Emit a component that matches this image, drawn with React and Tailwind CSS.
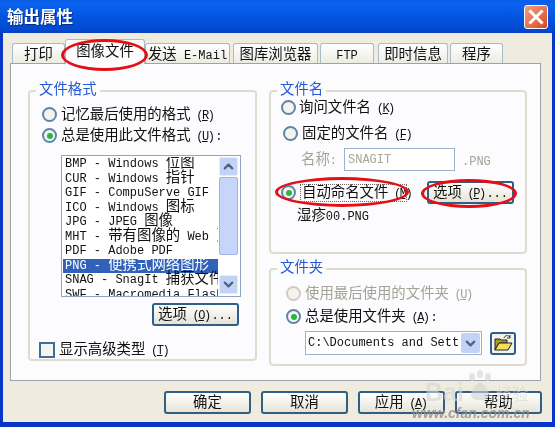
import { ChevronDown, ChevronUp } from 'lucide-react';

const CJK_STACK = '"Noto Sans CJK SC", sans-serif';

// CJK glyphs sit at 14px in the dialog, latin text is 12px mono, hotkeys like (R) are squeezed
const Mixed = ({ text, className = 'relative top-[1px]' }) => (
  <span className={`whitespace-pre ${className}`}>
    {text.split(/( \([A-Z]\)|[\u3000-\u9fff\uff00-\uffef]+)/).map((part, i) => {
      if (/^ \([A-Z]\)$/.test(part)) {
        return (
          <span key={i} className="tracking-[-1.5px]">
            {' ('}
            <span className="underline">{part[2]}</span>
            {')'}
            <span className="tracking-normal text-[3px]"> </span>
          </span>
        );
      }
      if (/[\u3000-\u9fff\uff00-\uffef]/.test(part)) {
        return (
          <span key={i} className="text-[14.4px] leading-[0]" style={{ fontFamily: CJK_STACK }}>
            {part}
          </span>
        );
      }
      return <span key={i}>{part}</span>;
    })}
  </span>
);

const Radio = ({ checked, disabled }) => (
  <span
    className={`flex h-[15px] w-[15px] shrink-0 items-center justify-center rounded-full border-2 bg-[#f4f3ee] ${
      disabled ? 'border-[#cfcdc2]' : 'border-[#5d86a8]'
    }`}
  >
    {checked && <span className="h-[6px] w-[6px] rounded-full bg-[#2fb344]" />}
  </span>
);

const RadioRow = ({ label, checked, disabled, className = '' }) => (
  <div className={`flex h-[21px] items-center gap-[4px] ${className}`}>
    <Radio checked={checked} disabled={disabled} />
    <span className={`whitespace-nowrap ${disabled ? 'text-[#a5a397]' : 'text-[#111]'}`}>
      <Mixed text={label} />
    </span>
  </div>
);

const XpButton = ({ label, className = '' }) => (
  <button className={`flex h-[23px] w-[87px] items-center justify-center rounded-[3px] border-2 border-[#2f5f86] bg-linear-to-b from-white to-[#e6e3d6] text-[#111] ${className}`}>
    <Mixed text={label} />
  </button>
);

const Group = ({ title, className = '', children }) => (
  <div className={`relative rounded-[4px] border-2 border-[#dedccf] ${className}`}>
    <span className="absolute -top-[8px] left-[6px] bg-[#fcfcfe] px-[3px] text-[#2359d8]">
      <Mixed text={title} />
    </span>
    {children}
  </div>
);

const tabs = [
  { label: '打印', w: 'w-[53px]' },
  { label: '图像文件', w: 'w-[80px]', active: true },
  { label: '发送 E-Mail', w: 'w-[85px]' },
  { label: '图库浏览器', w: 'w-[85px] ml-[3px]' },
  { label: 'FTP', w: 'w-[54px] ml-[2px]' },
  { label: '即时信息', w: 'w-[70px] ml-[4px]' },
  { label: '程序', w: 'w-[53px] ml-[2px]' },
];

const formats = [
  'BMP - Windows 位图',
  'CUR - Windows 指针',
  'GIF - CompuServe GIF',
  'ICO - Windows 图标',
  'JPG - JPEG 图像',
  'MHT - 带有图像的 Web 页',
  'PDF - Adobe PDF',
  'PNG - 便携式网络图形',
  'SNAG - SnagIt 捕获文件',
  'SWF - Macromedia Flash',
];

const ScrollButton = ({ children }) => (
  <div className="flex h-[19px] items-center justify-center rounded-[2px] border border-[#e4ecfb] bg-[#c3d3f8] text-[#4d6185]">
    {children}
  </div>
);

const Ellipse = ({ className }) => (
  <div className={`pointer-events-none absolute z-20 rounded-[50%] border-[3px] border-[#e40f14] ${className}`} />
);

export default function App() {
  return (
    <div
      className="relative flex h-[427px] w-[555px] flex-col overflow-hidden bg-[#0a36c8] text-[12px] leading-none blur-[0.35px]"
      style={{ fontFamily: '"Liberation Mono", "Noto Sans CJK SC", monospace' }}
    >
      <div className="flex h-[33px] shrink-0 items-center justify-between bg-[linear-gradient(#0a5fe8,#0a62ee_15%,#0355e0_50%,#0249cf_90%,#0a3fc0)] pl-[7px] pr-[7px]">
        <span
          className="text-[16.5px] font-bold text-white [text-shadow:1px_1px_1px_#0b2a80]"
          style={{ fontFamily: CJK_STACK }}
        >
          输出属性
        </span>
        <div className="flex h-[24px] w-[24px] items-center justify-center rounded-[3px] border border-white bg-linear-to-br from-[#f0a080] to-[#d6431c]">
          <svg width="16" height="16" viewBox="0 0 16 16">
            <path d="M2.5 2.5 13.5 13.5M13.5 2.5 2.5 13.5" stroke="#fff" strokeWidth="3" strokeLinecap="square" />
          </svg>
        </div>
      </div>

      <div className="mx-[3px] mb-[5px] flex flex-1 flex-col bg-[#efecdf]">
        <div className="flex h-[30px] shrink-0 items-end pl-[9px]">
          {tabs.map((tab) => (
            <div
              key={tab.label}
              className={`flex items-center justify-center whitespace-nowrap rounded-t-[3px] border border-b-0 border-[#a9bac8] text-[#111] ${tab.w} ${
                tab.active
                  ? 'relative z-10 -mb-[1px] h-[25px] bg-[#fcfcfe]'
                  : 'h-[20px] bg-linear-to-b from-white to-[#ecebe2] pt-[2px]'
              }`}
            >
              <Mixed text={tab.label} />
            </div>
          ))}
        </div>

        <div className="ml-[7px] flex h-[318px] w-[531px] shrink-0 gap-[12px] border border-[#98a5ad] bg-[#fcfcfe] pl-[17px] pt-[26px]">
          <Group title="文件格式" className="h-[271px] w-[229px] pl-[12px] pt-[12px]">
            <RadioRow label="记忆最后使用的格式 (R)" />
            <RadioRow label="总是使用此文件格式 (U):" checked />
            <div className="ml-[19px] mt-[9px] flex h-[142px] w-[180px] overflow-hidden border border-[#8fa7c4] bg-white pl-[1px] pt-[1px]">
              <div className="w-[155px] overflow-hidden">
                {formats.map((row, i) => (
                  <div
                    key={row}
                    className={`flex h-[14.5px] shrink-0 items-center whitespace-nowrap pl-[2px] ${
                      i === 7 ? 'bg-[#2f62b8] text-white' : 'text-[#111]'
                    }`}
                  >
                    <Mixed text={row} className="" />
                  </div>
                ))}
              </div>
              <div className="ml-[1px] flex w-[19px] flex-col">
                <ScrollButton><ChevronUp size={15} strokeWidth={3.5} /></ScrollButton>
                <div className="mt-[1px] h-[78px] rounded-[2px] border border-[#9db4e6] bg-[#c6d5f9]" />
                <div className="flex-1" />
                <div className="mb-[2px]">
                  <ScrollButton><ChevronDown size={15} strokeWidth={3.5} /></ScrollButton>
                </div>
              </div>
            </div>
            <XpButton label="选项 (O)..." className="ml-[110px] mt-[6px]" />
            <div className="-ml-[3px] mt-[16px] flex items-center gap-[4px]">
              <span className="h-[16px] w-[16px] border-2 border-[#3e6f98] bg-[#f5f4ee]" />
              <span className="whitespace-nowrap text-[#111]"><Mixed text="显示高级类型 (T)" /></span>
            </div>
          </Group>

          <div className="flex w-[258px] flex-col gap-[14px]">
            <Group title="文件名" className="h-[164px] w-[258px] pl-[10px] pt-[5px]">
              <RadioRow label="询问文件名 (K)" className="!gap-[3px]" />
              <RadioRow label="固定的文件名 (F)" className="ml-[2px] mt-[5px]" />
              <div className="mt-[4px] flex items-center text-[#a5a397]">
                <span className="ml-[20px] w-[43px]"><Mixed text="名称:" /></span>
                <div className="flex h-[23px] w-[111px] items-center border border-[#9db3c9] bg-white pl-[3px] text-[#a8a698]">
                  SNAGIT
                </div>
                <span className="ml-[7px] mt-[5px]">.PNG</span>
              </div>
              <div className="mt-[10px] flex items-center">
                <Radio checked />
                <span className="ml-[4px] flex h-[18px] w-[107px] items-center whitespace-nowrap border border-dotted border-[#666] pl-[1px] text-[#111]">
                  <Mixed text="自动命名文件 (M)" />
                </span>
                <XpButton label="选项 (P)..." className="ml-[20px]" />
              </div>
              <div className="ml-[16px] mt-[6px] text-[#111]"><Mixed text="湿疹00.PNG" /></div>
            </Group>

            <Group title="文件夹" className="h-[98px] w-[258px] pl-[15px] pt-[13px]">
              <RadioRow label="使用最后使用的文件夹 (U)" disabled />
              <RadioRow label="总是使用文件夹 (A):" checked className="mt-[2px]" />
              <div className="ml-[19px] mt-[4px] flex items-center gap-[8px]">
                <div className="flex h-[24px] w-[177px] items-center justify-between border border-[#9db3c9] bg-white pl-[2px] pr-[1px] text-[#111]">
                  <span className="w-[152px] overflow-hidden whitespace-nowrap">C:\Documents and Settings</span>
                  <span className="flex h-[20px] w-[19px] items-center justify-center rounded-[2px] bg-[#c3d3f8] text-[#4d6185]">
                    <ChevronDown size={15} strokeWidth={3.5} />
                  </span>
                </div>
                <div className="flex h-[23px] w-[26px] items-center justify-center rounded-[3px] border-2 border-[#2f5f86] bg-[#f4f3ea]">
                  <svg width="20" height="18" viewBox="0 0 20 18">
                    <path d="M2 16V5h5l1 1h6v3H6L2 16Z" fill="#a89a2c" stroke="#222" strokeWidth="1" />
                    <path d="M2 16 6 9h13l-4 7H2Z" fill="#f4e15a" stroke="#222" strokeWidth="1" />
                    <path d="M11 4c1-3 4-3 6-1M17 1v3h-3" fill="none" stroke="#333" strokeWidth="1" />
                  </svg>
                </div>
              </div>
            </Group>
          </div>
        </div>

        <div className="mt-[10px] flex justify-end gap-[10px] pr-[10px]">
          <XpButton label="确定" />
          <XpButton label="取消" />
          <XpButton label="应用 (A)" />
          <XpButton label="帮助" />
        </div>
      </div>

      <Ellipse className="left-[61px] top-[39px] h-[32px] w-[87px]" />
      <Ellipse className="left-[275px] top-[177px] h-[30px] w-[134px]" />
      <Ellipse className="left-[421px] top-[179px] h-[29px] w-[96px]" />

      {/* watermark */}
      <div className="pointer-events-none absolute left-[425px] top-[369px] z-30 flex items-end opacity-60" style={{ fontFamily: '"Liberation Sans", sans-serif' }}>
        <span className="text-[25px] font-bold leading-none text-[#d4d4d4]">Bai</span>
        <svg width="32" height="36" viewBox="0 0 32 36" fill="#d4d4d4">
          <ellipse cx="8" cy="8" rx="3" ry="4" />
          <ellipse cx="16" cy="5" rx="3" ry="4" />
          <ellipse cx="24" cy="8" rx="3" ry="4" />
          <path d="M16 14c-5 0-9 7-9 12 0 7 18 7 18 0 0-5-4-12-9-12Z" />
        </svg>
        <span className="mb-[4px] text-[16px] leading-none text-[#d4d4d4]" style={{ fontFamily: CJK_STACK }}>经验</span>
      </div>
      <div className="pointer-events-none absolute left-[412px] top-[406px] z-30 whitespace-nowrap text-[14px] font-bold italic text-[#8f8f8f] opacity-80" style={{ fontFamily: '"Liberation Sans", sans-serif' }}>
        www.cfan.com.cn
      </div>
    </div>
  );
}
